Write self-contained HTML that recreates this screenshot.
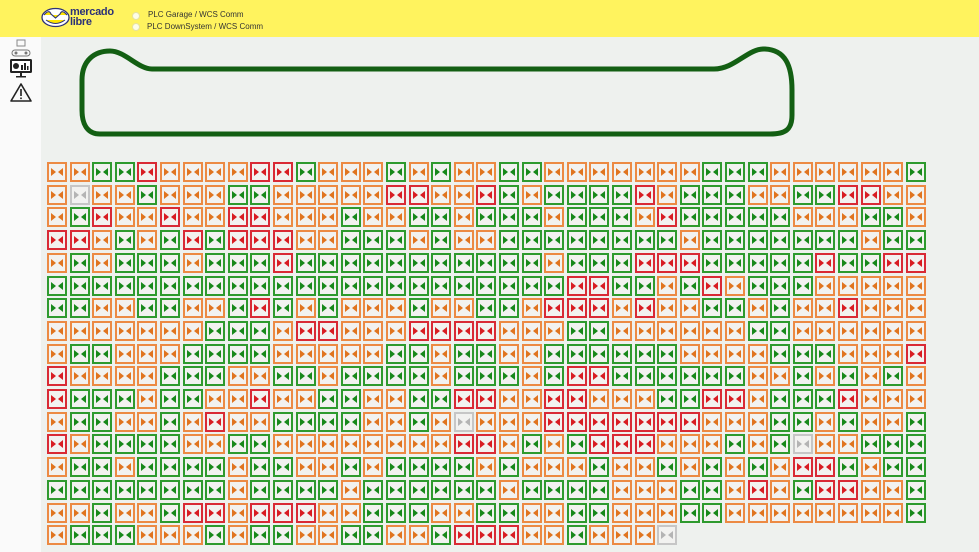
<!DOCTYPE html>
<html><head><meta charset="utf-8">
<style>
html,body{margin:0;padding:0;}
body{width:979px;height:552px;position:relative;overflow:hidden;background:#eef1ee;font-family:"Liberation Sans",sans-serif;}
#hdr{position:absolute;left:0;top:0;width:979px;height:37px;background:#fff35e;}
#side{position:absolute;left:0;top:37px;width:41px;height:515px;background:#fafafa;}
.c{position:absolute;width:16px;height:16px;border:2px solid;background:#f2f2f0;box-sizing:content-box;}
.c:before,.c:after{content:"";position:absolute;top:4px;width:0;height:0;border-top:4px solid transparent;border-bottom:4px solid transparent;}
.c:before{left:2px;border-left:5px solid var(--t);}
.c:after{right:2px;border-right:5px solid var(--t);}
.O{border-color:#ec8a43;--t:#e0741f;}
.G{border-color:#2e9a2e;--t:#17881a;}
.R{border-color:#d92a35;--t:#d81c22;}
.X{border-color:#c6c6c6;--t:#b4b4b4;}
.t{position:absolute;font-size:8px;color:#333;white-space:nowrap;}
.rad{position:absolute;width:6px;height:6px;border-radius:50%;background:#fdfde8;border:1px solid #e6e2a0;}
</style></head><body>
<div id="hdr">
  <svg style="position:absolute;left:41px;top:7px" width="29" height="21" viewBox="0 0 29 21">
    <ellipse cx="14.5" cy="10.5" rx="13.5" ry="9" fill="#fff" stroke="#2d3277" stroke-width="1.3"/>
    <path d="M3 8 Q8 2 10 7 L14.5 11 L19 7 Q21 2 26 8" fill="#ffe600" stroke="#2d3277" stroke-width="1.1"/>
    <path d="M5 13 Q14.5 20 24 13" fill="#ffe600" stroke="#2d3277" stroke-width="1"/>
  </svg>
  <div class="t" style="left:70px;top:7px;font-size:11px;line-height:10px;color:#2d3277;font-weight:bold;letter-spacing:-0.3px">mercado<br>libre</div>
  <div class="rad" style="left:132px;top:12px"></div>
  <div class="rad" style="left:132px;top:23px"></div>
  <div class="t" style="left:148px;top:10px">PLC Garage / WCS Comm</div>
  <div class="t" style="left:147px;top:22px">PLC DownSystem / WCS Comm</div>
</div>
<div id="side">
  <svg style="position:absolute;left:8px;top:2px" width="26" height="64" viewBox="0 0 26 64">
    <rect x="9" y="1" width="8" height="6" fill="none" stroke="#888" stroke-width="1"/>
    <rect x="4" y="11" width="18" height="6" rx="3" fill="none" stroke="#777" stroke-width="1"/>
    <circle cx="8" cy="14" r="1.5" fill="#777"/><circle cx="18" cy="14" r="1.5" fill="#777"/>
    <rect x="2" y="20" width="22" height="14" rx="1.5" fill="#222"/>
    <rect x="4" y="22" width="18" height="10" fill="#fff"/>
    <circle cx="8" cy="27" r="3" fill="#222"/>
    <rect x="13" y="26" width="2" height="5" fill="#222"/><rect x="16" y="24" width="2" height="7" fill="#222"/><rect x="19" y="27" width="1.5" height="4" fill="#222"/>
    <rect x="12" y="34" width="2" height="3" fill="#222"/><rect x="8" y="37" width="10" height="1.5" fill="#222"/>
    <path d="M13 45 L23 62 L3 62 Z" fill="none" stroke="#222" stroke-width="1.6" stroke-linejoin="round"/>
    <rect x="12.2" y="50" width="1.6" height="7" fill="#222"/><rect x="12.2" y="58.5" width="1.6" height="1.6" fill="#222"/>
  </svg>
</div>
<svg style="position:absolute;left:0;top:0" width="979" height="160">
  <path d="M152 69 L714 69 C735 69 748 48 765 49 C785 50 792 65 792 90 L792 115 C792 130 785 134 770 134 L100 134 C88 134 82 125 82 110 L82 80 C82 60 95 51 110 51 C125 51 138 69 152 69 Z" fill="none" stroke="#135f13" stroke-width="5"/>
</svg>
<div id="grid"></div>
<script>
var rows=[
"OOGGROOOORRGOOOGOGO"+"OGGOOOOOOOGGGOOOOOOG",
"OXOOGOOOGGOOOOORROO"+"RGOGGGGROGGGOOGGRROO",
"OGROOROORROOOGOOGGO"+"GGGOGGGORGGGGGOOOGGO",
"RROGOGRGRRROOGGGOGO"+"OGGGGGGGGOGGGGGGGOGG",
"OGOGGGOGGGRGGGGGGGG"+"GGGOGGGRRRGGGGGRGGRR",
"GGGGGGGGGGGGGGGGGGG"+"GGGGRRGGOGROGGGOOOOO",
"GGOOGGOOGRGOGOOOGOO"+"GGORRROROOGGOGOOROOO",
"OOOOOOOGGGORROOORRR"+"ROOOGGOOOOOOGGOOOOOO",
"OGGOOOGGGGOOOOOGGOG"+"GOOGGGGGGOOOOGGGOOOR",
"ROOOOGGGOOGGOGGGGOG"+"GGOGRRGGGGGGOOGOGOGO",
"RGGGOGGOOROOGGOOGGR"+"ROORROOOGGRROGGGROOO",
"OGGOOGOROOGGGGOOGOX"+"OOORRRRRRROOOGGOGOOG",
"ROGGGGOOGGOOOOOOOOR"+"ROGOGRRROOOGOGXOOGGG",
"OGGOGGGGOGGOOGOGGGG"+"OGOOOGOOGOGOGORRGOGG",
"GGGGGGGGOGGGGOGGGGG"+"GOGGGGOOOGGOROGRROOG",
"OOGOOGRRORRROOGGGOO"+"GGOOGGOOOGGOOOOOOOOG",
"OGGGOOOGOGGOOGGOOGR"+"RROOGOOOX"];
var h="";
for(var r=0;r<rows.length;r++){for(var c=0;c<rows[r].length;c++){
h+='<div class="c '+rows[r][c]+'" style="left:'+Math.round(47+22.6*c)+'px;top:'+Math.round(162+22.7*r)+'px"></div>';}}
document.getElementById("grid").innerHTML=h;
</script>
</body></html>
